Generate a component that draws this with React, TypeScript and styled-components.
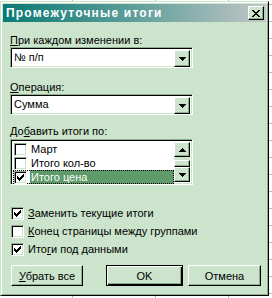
import React from "react";
import styled, { createGlobalStyle, css } from "styled-components";

const BG = "#cce4cc";
const SHADOW = "#8eae8e";
const DARK = "#000000";
const LIGHT = "#ffffff";
const SELECT = "#5e9a6a";

const GlobalStyle = createGlobalStyle`
  html, body { margin: 0; padding: 0; }
  body {
    width: 272px;
    height: 298px;
    overflow: hidden;
    background-color: #ffffff;
    background-image:
      linear-gradient(to right, transparent 72px, #b8b8b8 72px, #b8b8b8 73px, transparent 73px),
      linear-gradient(to right, transparent 155px, #b8b8b8 155px, #b8b8b8 156px, transparent 156px),
      linear-gradient(to right, transparent 228px, #b8b8b8 228px, #b8b8b8 229px, transparent 229px),
      repeating-linear-gradient(to bottom, transparent 0, transparent 4px, #b8b8b8 4px, #b8b8b8 5px, transparent 5px, transparent 17px);
    font-family: "Liberation Sans", Arial, sans-serif;
    font-size: 11px;
    color: #000;
  }
`;

const Window = styled.div`
  box-sizing: border-box;
  margin-top: 1px;
  width: 269px;
  height: 295px;
  background: ${BG};
  border: 1px solid;
  border-color: ${BG} ${DARK} ${DARK} ${BG};
  box-shadow: inset 1px 1px ${LIGHT}, inset -1px -1px ${SHADOW};
  padding: 2px;
  display: flex;
  flex-direction: column;
`;

const TitleBar = styled.div`
  height: 18px;
  display: flex;
  align-items: center;
  justify-content: space-between;
  padding: 0 2px 0 3px;
  background: linear-gradient(to right, #0a7a76 0%, #5f9e9a 50%, #c2c6c6 100%);
`;

const TitleText = styled.span`
  color: #ffffff;
  font-weight: bold;
  font-size: 12px;
  letter-spacing: 1.2px;
  line-height: 18px;
  white-space: nowrap;
`;

const raised = css`
  background: ${BG};
  border: 1px solid;
  border-color: ${LIGHT} ${DARK} ${DARK} ${LIGHT};
  box-shadow: inset -1px -1px ${SHADOW};
`;

const sunken = css`
  border: 1px solid;
  border-color: ${SHADOW} ${LIGHT} ${LIGHT} ${SHADOW};
  box-shadow: inset 1px 1px ${DARK}, inset -1px -1px ${BG};
`;

const CloseButton = styled.div`
  box-sizing: border-box;
  width: 16px;
  height: 14px;
  ${raised};
  display: flex;
  align-items: center;
  justify-content: center;
`;

const Content = styled.div`
  flex: 1;
  display: flex;
  flex-direction: column;
  padding: 12px 5px 0 7px;
`;

const Label = styled.div<{ $gap: number }>`
  margin-top: ${(p) => p.$gap}px;
  line-height: 13px;
  white-space: nowrap;
`;

const Accel = styled.span`
  text-decoration: underline;
  text-underline-offset: 1px;
`;

const Combo = styled.div`
  box-sizing: border-box;
  width: 183px;
  height: 21px;
  ${sunken};
  background: #ffffff;
  display: flex;
  align-items: stretch;
  padding: 2px;
`;

const ComboValue = styled.div`
  flex: 1;
  display: flex;
  align-items: center;
  padding-left: 1px;
  line-height: 13px;
`;

const ArrowButton = styled.div<{ $h: number }>`
  box-sizing: border-box;
  width: 16px;
  height: ${(p) => p.$h}px;
  ${raised};
  display: flex;
  align-items: center;
  justify-content: center;
`;

const ListBox = styled.div`
  box-sizing: border-box;
  margin-top: 1px;
  width: 183px;
  height: 46px;
  ${sunken};
  background: #ffffff;
  padding: 2px;
  display: flex;
`;

const ListRows = styled.div`
  flex: 1;
  display: flex;
  flex-direction: column;
`;

const ListRow = styled.div<{ $focused?: boolean }>`
  box-sizing: border-box;
  height: 14px;
  display: flex;
  align-items: center;
  gap: 3px;
  outline: ${(p) => (p.$focused ? "1px dotted #000" : "none")};
  outline-offset: -1px;
  padding-left: 1px;
`;

const ListText = styled.span<{ $selected?: boolean }>`
  flex: 1;
  height: 14px;
  line-height: 14px;
  padding-left: 1px;
  background: ${(p) => (p.$selected ? SELECT : "transparent")};
  color: ${(p) => (p.$selected ? "#ffffff" : "#000000")};
  white-space: nowrap;
`;

const ScrollBar = styled.div`
  width: 16px;
  display: flex;
  flex-direction: column;
  background: ${BG};
`;

const ScrollTrack = styled.div`
  flex: 1;
  display: flex;
  flex-direction: column;
  justify-content: flex-end;
`;

const ScrollThumb = styled.div`
  box-sizing: border-box;
  height: 7px;
  ${raised};
`;

const Box = styled.div`
  box-sizing: border-box;
  width: 13px;
  height: 13px;
  flex: none;
  background: #ffffff;
  ${sunken};
  position: relative;
`;

const CheckMarkSvg = styled.svg`
  position: absolute;
  left: -1px;
  top: -1px;
`;

const Checks = styled.div`
  margin-top: 19px;
  display: flex;
  flex-direction: column;
`;

const CheckRow = styled.div`
  height: 18px;
  display: flex;
  align-items: center;
  gap: 4px;
  padding-left: 1px;
  white-space: nowrap;
`;

const ButtonRow = styled.div`
  margin-top: 7px;
  display: flex;
  justify-content: space-between;
  padding-left: 1px;
`;

const ButtonGroup = styled.div`
  display: flex;
  gap: 5px;
`;

const Button = styled.div<{ $w: number; $default?: boolean }>`
  box-sizing: border-box;
  width: ${(p) => p.$w}px;
  height: 21px;
  display: flex;
  align-items: center;
  justify-content: center;
  background: ${BG};
  ${(p) =>
    p.$default
      ? css`
          border: 1px solid #000;
          box-shadow: inset 1px 1px ${LIGHT}, inset -1px -1px ${DARK}, inset -2px -2px ${SHADOW};
        `
      : css`
          border: 1px solid;
          border-color: ${LIGHT} ${DARK} ${DARK} ${LIGHT};
          box-shadow: inset -1px -1px ${SHADOW};
        `}
`;

const CheckMark = () => (
  <CheckMarkSvg width="13" height="13" viewBox="0 0 13 13">
    <path
      fill="#000"
      d="M3 5h1v3H3z M4 6h1v3H4z M5 7h1v3H5z M6 6h1v3H6z M7 5h1v3H7z M8 4h1v3H8z M9 3h1v3H9z"
    />
  </CheckMarkSvg>
);

const DownArrow = () => (
  <svg width="7" height="4" viewBox="0 0 7 4">
    <path fill="#000" d="M0 0h7v1H0z M1 1h5v1H1z M2 2h3v1H2z M3 3h1v1H3z" />
  </svg>
);

const UpArrow = () => (
  <svg width="7" height="4" viewBox="0 0 7 4">
    <path fill="#000" d="M3 0h1v1H3z M2 1h3v1H2z M1 2h5v1H1z M0 3h7v1H0z" />
  </svg>
);

const CloseGlyph = () => (
  <svg width="8" height="7" viewBox="0 0 8 7">
    <path
      fill="#000"
      d="M0 0h2v1H0z M6 0h2v1H6z M1 1h2v1H1z M5 1h2v1H5z M2 2h4v1H2z M3 3h2v1H3z M2 4h4v1H2z M1 5h2v1H1z M5 5h2v1H5z M0 6h2v1H0z M6 6h2v1H6z"
    />
  </svg>
);

const Check = ({ on }: { on?: boolean }) => <Box>{on && <CheckMark />}</Box>;

export default function App() {
  return (
    <>
      <GlobalStyle />
      <Window>
        <TitleBar>
          <TitleText>Промежуточные итоги</TitleText>
          <CloseButton>
            <CloseGlyph />
          </CloseButton>
        </TitleBar>
        <Content>
          <Label $gap={0}>
            <Accel>П</Accel>ри каждом изменении в:
          </Label>
          <Combo>
            <ComboValue>№ п/п</ComboValue>
            <ArrowButton $h={17}>
              <DownArrow />
            </ArrowButton>
          </Combo>

          <Label $gap={13}>
            <Accel>О</Accel>перация:
          </Label>
          <Combo>
            <ComboValue>Сумма</ComboValue>
            <ArrowButton $h={17}>
              <DownArrow />
            </ArrowButton>
          </Combo>

          <Label $gap={10}>
            До<Accel>б</Accel>авить итоги по:
          </Label>
          <ListBox>
            <ListRows>
              <ListRow>
                <Check />
                <ListText>Март</ListText>
              </ListRow>
              <ListRow>
                <Check />
                <ListText>Итого кол-во</ListText>
              </ListRow>
              <ListRow $focused>
                <Check on />
                <ListText $selected>Итого цена</ListText>
              </ListRow>
            </ListRows>
            <ScrollBar>
              <ArrowButton $h={15}>
                <UpArrow />
              </ArrowButton>
              <ScrollTrack>
                <ScrollThumb />
              </ScrollTrack>
              <ArrowButton $h={15}>
                <DownArrow />
              </ArrowButton>
            </ScrollBar>
          </ListBox>

          <Checks>
            <CheckRow>
              <Check on />
              <span>
                <Accel>З</Accel>аменить текущие итоги
              </span>
            </CheckRow>
            <CheckRow>
              <Check />
              <span>
                <Accel>К</Accel>онец страницы между группами
              </span>
            </CheckRow>
            <CheckRow>
              <Check on />
              <span>
                Ито<Accel>г</Accel>и под данными
              </span>
            </CheckRow>
          </Checks>

          <ButtonRow>
            <Button $w={72}>
              <span>
                <Accel>У</Accel>брать все
              </span>
            </Button>
            <ButtonGroup>
              <Button $w={77} $default>
                OK
              </Button>
              <Button $w={73}>Отмена</Button>
            </ButtonGroup>
          </ButtonRow>
        </Content>
      </Window>
    </>
  );
}
